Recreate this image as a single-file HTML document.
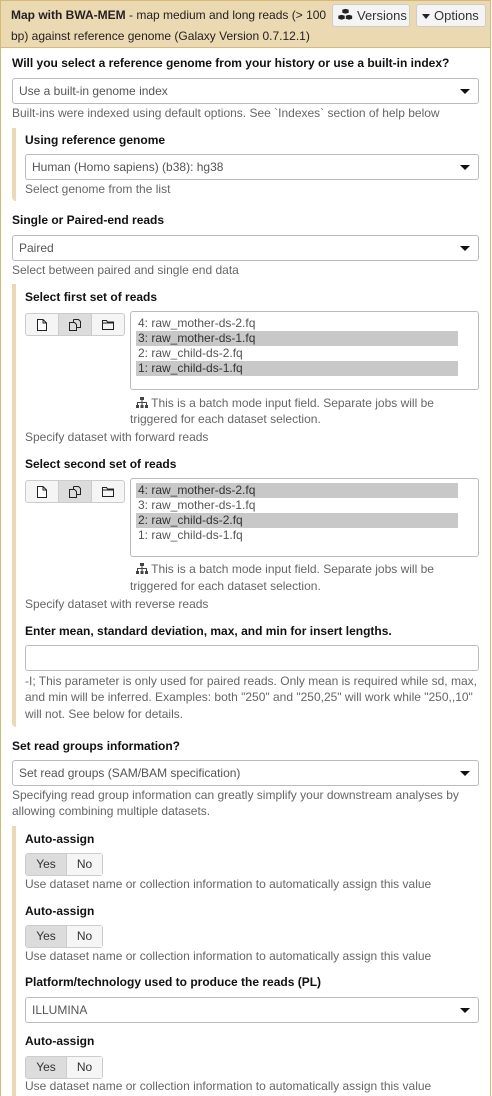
<!DOCTYPE html>
<html><head><meta charset="utf-8"><style>
*{box-sizing:border-box;margin:0;padding:0}
body{width:492px;height:1096px;overflow:hidden;background:#fff;font-family:"Liberation Sans",sans-serif;font-size:12px;color:#333;position:relative}
.a{position:absolute;white-space:nowrap;line-height:16px}
.b{font-weight:bold;color:#111}
.h{color:#666}
.sel{position:absolute;border:1px solid #bbb;border-radius:3px;background:#fff;height:26px;line-height:24px;padding-left:6px;color:#555}
.sel:after{content:"";position:absolute;right:8px;top:10px;border-left:5px solid transparent;border-right:5px solid transparent;border-top:5px solid #111}
.sel:empty:after{display:none}
.bar{position:absolute;left:12px;width:4px;background:#ebd9b2;border-radius:0 0 0 4px}
.lb{position:absolute;border:1px solid #bbb;border-radius:3px;background:#fff}
.lb div{height:15px;line-height:15px;padding-left:2px;margin-left:5px;width:322px;color:#555}
.lb .s{background:#c8c8c8;color:#333}
.grp{position:absolute;left:25px;width:100px;height:23px;border:1px solid #ccc;border-radius:3px;background:#f5f5f5;display:flex}
.grp span{flex:1;border-right:1px solid #ccc;display:flex;align-items:center;justify-content:center}
.grp span:last-child{border-right:0}
.grp .on{background:#dcdcdc}
.tg{position:absolute;left:25px;width:78px;height:23px;border:1px solid #ccc;border-radius:3px;display:flex;line-height:21px}
.tg span{text-align:center}
</style></head><body>
<div style="position:absolute;left:0;top:0;width:491px;height:1096px;border:1px solid #d8b877;border-top:0;border-bottom:0"></div>
<div style="position:absolute;left:0;top:0;width:491px;height:48px;background:#ebd9b2;border:1px solid #d8b877"></div>
<div class="a" style="left:11px;top:7px;color:#222"><b>Map with BWA-MEM</b> - map medium and long reads (&gt; 100</div>
<div class="a" style="left:11px;top:28px;color:#222">bp) against reference genome (Galaxy Version 0.7.12.1)</div>
<div style="position:absolute;left:332px;top:4px;width:78px;height:23px;border:1px solid #ccc;border-radius:3px;background:#f4f4f4;line-height:21px;padding-left:24px;font-size:13px;color:#333">Versions
<svg style="position:absolute;left:4px;top:3px" width="17" height="15" viewBox="0 0 17 15"><g fill="#222" stroke="#fff" stroke-width=".6"><path d="M5 1.5l3.5-1 3.5 1v3.5l-3.5 1-3.5-1z"/><path d="M1 7.5l3.5-1 3.5 1v3.5l-3.5 1-3.5-1z"/><path d="M8.5 7.5l3.5-1 3.5 1v3.5l-3.5 1-3.5-1z"/></g></svg></div>
<div style="position:absolute;left:416px;top:4px;width:70px;height:23px;border:1px solid #ccc;border-radius:3px;background:#f4f4f4;line-height:21px;padding-left:17px;font-size:13px;color:#333">Options<span style="position:absolute;left:5px;top:9px;border-left:4px solid transparent;border-right:4px solid transparent;border-top:5px solid #222"></span></div>

<div class="a b" style="left:12px;top:55px">Will you select a reference genome from your history or use a built-in index?</div>
<div class="sel" style="left:12px;top:78px;width:467px">Use a built-in genome index</div>
<div class="a h" style="left:12px;top:105px">Built-ins were indexed using default options. See `Indexes` section of help below</div>

<div class="bar" style="top:128px;height:73px"></div>
<div class="a b" style="left:25px;top:132px">Using reference genome</div>
<div class="sel" style="left:25px;top:154px;width:454px">Human (Homo sapiens) (b38): hg38</div>
<div class="a h" style="left:25px;top:181px">Select genome from the list</div>

<div class="a b" style="left:12px;top:212px">Single or Paired-end reads</div>
<div class="sel" style="left:12px;top:235px;width:467px">Paired</div>
<div class="a h" style="left:12px;top:262px">Select between paired and single end data</div>

<div class="bar" style="top:284px;height:443px"></div>
<div class="a b" style="left:25px;top:289px">Select first set of reads</div>
<div class="grp" style="top:313px">
<span><svg width="10" height="12" viewBox="0 0 10 12"><path d="M.5.5h5.5l3.5 3.5v7.5h-9z M6 .5v3.5h3.5" fill="#fff" stroke="#222"/></svg></span>
<span class="on"><svg width="13" height="12" viewBox="0 0 13 12"><path d="M.5 3.5h5l2 2v6h-7z" fill="none" stroke="#222"/><path d="M4.5.5h5l2 2v6h-4M4.5.5v3" fill="none" stroke="#222"/></svg></span>
<span><svg width="12" height="10" viewBox="0 0 12 10"><path d="M.5.5h4l1 1.5h6v7.5h-11z M.5 3h11" fill="none" stroke="#222"/></svg></span></div>
<div class="lb" style="left:130px;top:311px;width:349px;height:79px;padding-top:4px">
<div>4: raw_mother-ds-2.fq</div><div class="s">3: raw_mother-ds-1.fq</div><div>2: raw_child-ds-2.fq</div><div class="s">1: raw_child-ds-1.fq</div></div>
<div class="a h" style="left:136px;top:395px"><svg width="12" height="11" viewBox="0 0 12 11" style="vertical-align:-1px"><g fill="#444"><rect x="4" y="0" width="4" height="3"/><rect x="5.5" y="3" width="1" height="2"/><rect x="1" y="5" width="10" height="1"/><rect x="1" y="5" width="1" height="3"/><rect x="5.5" y="5" width="1" height="3"/><rect x="10" y="5" width="1" height="3"/><rect x="0" y="8" width="3" height="3"/><rect x="4.5" y="8" width="3" height="3"/><rect x="9" y="8" width="3" height="3"/></g></svg> This is a batch mode input field. Separate jobs will be</div>
<div class="a h" style="left:130px;top:411px">triggered for each dataset selection.</div>
<div class="a h" style="left:25px;top:429px">Specify dataset with forward reads</div>

<div class="a b" style="left:25px;top:456px">Select second set of reads</div>
<div class="grp" style="top:480px">
<span><svg width="10" height="12" viewBox="0 0 10 12"><path d="M.5.5h5.5l3.5 3.5v7.5h-9z M6 .5v3.5h3.5" fill="#fff" stroke="#222"/></svg></span>
<span class="on"><svg width="13" height="12" viewBox="0 0 13 12"><path d="M.5 3.5h5l2 2v6h-7z" fill="none" stroke="#222"/><path d="M4.5.5h5l2 2v6h-4M4.5.5v3" fill="none" stroke="#222"/></svg></span>
<span><svg width="12" height="10" viewBox="0 0 12 10"><path d="M.5.5h4l1 1.5h6v7.5h-11z M.5 3h11" fill="none" stroke="#222"/></svg></span></div>
<div class="lb" style="left:130px;top:478px;width:349px;height:79px;padding-top:4px">
<div class="s">4: raw_mother-ds-2.fq</div><div>3: raw_mother-ds-1.fq</div><div class="s">2: raw_child-ds-2.fq</div><div>1: raw_child-ds-1.fq</div></div>
<div class="a h" style="left:136px;top:561px"><svg width="12" height="11" viewBox="0 0 12 11" style="vertical-align:-1px"><g fill="#444"><rect x="4" y="0" width="4" height="3"/><rect x="5.5" y="3" width="1" height="2"/><rect x="1" y="5" width="10" height="1"/><rect x="1" y="5" width="1" height="3"/><rect x="5.5" y="5" width="1" height="3"/><rect x="10" y="5" width="1" height="3"/><rect x="0" y="8" width="3" height="3"/><rect x="4.5" y="8" width="3" height="3"/><rect x="9" y="8" width="3" height="3"/></g></svg> This is a batch mode input field. Separate jobs will be</div>
<div class="a h" style="left:130px;top:578px">triggered for each dataset selection.</div>
<div class="a h" style="left:25px;top:596px">Specify dataset with reverse reads</div>

<div class="a b" style="left:25px;top:623px">Enter mean, standard deviation, max, and min for insert lengths.</div>
<div class="sel" style="left:25px;top:645px;width:454px"></div>
<div class="a h" style="left:25px;top:673px">-I; This parameter is only used for paired reads. Only mean is required while sd, max,</div>
<div class="a h" style="left:25px;top:689px">and min will be inferred. Examples: both "250" and "250,25" will work while "250,,10"</div>
<div class="a h" style="left:25px;top:706px">will not. See below for details.</div>

<div class="a b" style="left:12px;top:738px">Set read groups information?</div>
<div class="sel" style="left:12px;top:760px;width:467px">Set read groups (SAM/BAM specification)</div>
<div class="a h" style="left:12px;top:787px">Specifying read group information can greatly simplify your downstream analyses by</div>
<div class="a h" style="left:12px;top:803px">allowing combining multiple datasets.</div>

<div class="bar" style="top:826px;height:270px;border-radius:0"></div>
<div class="a b" style="left:25px;top:831px">Auto-assign</div>
<div class="tg" style="top:853px"><span style="width:41px;background:#dcdcdc;border-right:1px solid #ccc">Yes</span><span style="flex:1;background:#f5f5f5">No</span></div>
<div class="a h" style="left:25px;top:876px">Use dataset name or collection information to automatically assign this value</div>
<div class="a b" style="left:25px;top:903px">Auto-assign</div>
<div class="tg" style="top:925px"><span style="width:41px;background:#dcdcdc;border-right:1px solid #ccc">Yes</span><span style="flex:1;background:#f5f5f5">No</span></div>
<div class="a h" style="left:25px;top:948px">Use dataset name or collection information to automatically assign this value</div>
<div class="a b" style="left:25px;top:974px">Platform/technology used to produce the reads (PL)</div>
<div class="sel" style="left:25px;top:997px;width:454px">ILLUMINA</div>
<div class="a b" style="left:25px;top:1033px">Auto-assign</div>
<div class="tg" style="top:1056px"><span style="width:41px;background:#dcdcdc;border-right:1px solid #ccc">Yes</span><span style="flex:1;background:#f5f5f5">No</span></div>
<div class="a h" style="left:25px;top:1078px">Use dataset name or collection information to automatically assign this value</div>
</body></html>
